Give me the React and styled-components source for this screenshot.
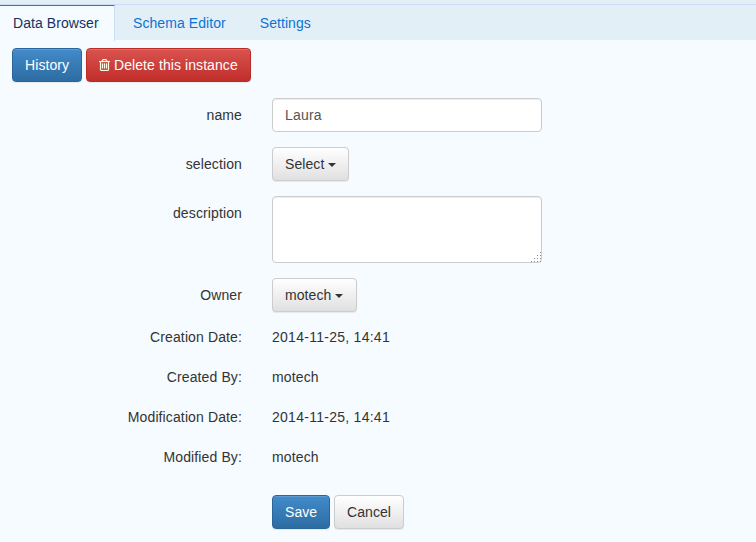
import React from "react";
import styled, { createGlobalStyle, css } from "styled-components";

const GlobalStyle = createGlobalStyle`
  * { box-sizing: border-box; }
  body {
    margin: 0;
    background: #f5fbff;
    color: #333;
    font: 14px/20px "Liberation Sans", Helvetica, Arial, sans-serif;
    overflow: hidden;
  }
`;

const Page = styled.main`
  height: 542px;
  background: #f5fbff;
`;

const TabBar = styled.nav`
  display: flex;
  height: 40px;
  padding-top: 5px;
  background: linear-gradient(#cddcf9, #cddcf9) 0 4px / 100% 1px no-repeat #e2eff7;
`;

const Tab = styled.a`
  height: 35px;
  padding: 8px 17px 0;
  letter-spacing: 0.07px;
  color: #0d73d2;
  ${(p) =>
    p.$active &&
    css`
      width: 115px;
      height: 36px;
      margin-right: 1px;
      padding: 7px 0 0 13px;
      border-top: 1px solid #0d83dd;
      border-right: 1px solid #cddcf9;
      background: #f5fbff;
      color: #14335f;
    `}
`;

const Toolbar = styled.div`
  display: flex;
  gap: 4px;
  padding: 8px 12px 0;
`;

const tones = {
  primary: css`
    color: #fff;
    border-color: #2b669a;
    background-image: linear-gradient(#428bca, #2d6ca2);
  `,
  danger: css`
    color: #fff;
    border-color: #b92c28;
    background-image: linear-gradient(#d9534f, #c12e2a);
  `,
  plain: css`
    color: #333;
    border-color: #ccc;
    background-image: linear-gradient(#fff, #e0e0e0);
  `,
};

const Button = styled.button`
  display: inline-flex;
  align-items: center;
  justify-content: flex-start;
  width: ${(p) => p.$width}px;
  height: 34px;
  padding: 0 0 0 12px;
  border: 1px solid;
  border-radius: 4px;
  font: inherit;
  letter-spacing: 0.08px;
  white-space: nowrap;
  box-shadow: inset 0 1px 0 rgba(255, 255, 255, 0.15), 0 1px 1px rgba(0, 0, 0, 0.075);
  ${(p) => tones[p.$tone]}
`;

const TrashIcon = styled.svg`
  width: 11px;
  height: 12px;
  margin-right: 4px;
  fill: #fffbe6;
  stroke: #fffbe6;
  stroke-width: 30;
`;

const Caret = styled.span`
  margin: 1px 0 0 4px;
  border-top: 4px solid #333;
  border-left: 4px solid transparent;
  border-right: 4px solid transparent;
`;

const Form = styled.form`
  display: flex;
  flex-direction: column;
  gap: 15px;
  padding-top: 16px;
`;

const Row = styled.div`
  display: grid;
  grid-template-columns: 242px 270px;
  column-gap: 30px;
  align-items: start;
`;

const Label = styled.label`
  padding-top: 7px;
  text-align: right;
  letter-spacing: 0.12px;
`;

const field = css`
  display: block;
  width: 270px;
  padding: 6px 12px;
  border: 1px solid #ccc;
  border-radius: 4px;
  background: #fff;
  color: #555;
  font: inherit;
  letter-spacing: 0.2px;
  box-shadow: inset 0 1px 1px rgba(0, 0, 0, 0.075);
`;

const Input = styled.input`
  ${field}
  height: 34px;
`;

const AreaWrap = styled.div`
  position: relative;
  height: 67px;
`;

const TextArea = styled.textarea`
  ${field}
  height: 67px;
  resize: none;
`;

const Grip = styled.svg`
  position: absolute;
  right: 1px;
  bottom: 1px;
  width: 10px;
  height: 10px;
  fill: #8a8a8a;
`;

const Details = styled.dl`
  display: grid;
  grid-template-columns: 242px 270px;
  column-gap: 30px;
  grid-auto-rows: 40px;
  margin: 0;
`;

const Term = styled.dt`
  text-align: right;
  letter-spacing: 0.12px;
`;

const Value = styled.dd`
  margin: 0;
  letter-spacing: ${(p) => (p.$numeric ? 0.27 : 0.15)}px;
`;

const Actions = styled.div`
  display: flex;
  gap: 4px;
  margin-top: -7px;
  padding-left: 272px;
`;

const details = [
  { term: "Creation Date:", value: "2014-11-25, 14:41", numeric: true },
  { term: "Created By:", value: "motech" },
  { term: "Modification Date:", value: "2014-11-25, 14:41", numeric: true },
  { term: "Modified By:", value: "motech" },
];

const gripDots = [0, 1, 2, 3].flatMap((r) =>
  Array.from({ length: r + 1 }, (_, i) => [9 - i * 3, r * 3])
);

export default function App() {
  return (
    <>
      <GlobalStyle />
      <Page>
        <TabBar>
          <Tab $active>Data Browser</Tab>
          <Tab>Schema Editor</Tab>
          <Tab>Settings</Tab>
        </TabBar>
        <Toolbar>
          <Button $tone="primary" $width={70}>History</Button>
          <Button $tone="danger" $width={165}>
            <TrashIcon viewBox="192 128 1408 1536">
              <path d="M704 736v576q0 14-9 23t-23 9h-64q-14 0-23-9t-9-23v-576q0-14 9-23t23-9h64q14 0 23 9t9 23zm256 0v576q0 14-9 23t-23 9h-64q-14 0-23-9t-9-23v-576q0-14 9-23t23-9h64q14 0 23 9t9 23zm256 0v576q0 14-9 23t-23 9h-64q-14 0-23-9t-9-23v-576q0-14 9-23t23-9h64q14 0 23 9t9 23zm128 724v-948h-896v948q0 22 7 40.5t14.5 27 10.5 8.5h832q3 0 10.5-8.5t14.5-27 7-40.5zm-672-1076h448l-48-117q-7-9-17-11h-317q-10 2-17 11zm928 32v64q0 14-9 23t-23 9h-96v948q0 83-47 143.5t-113 60.5h-832q-66 0-113-58.5t-47-141.5v-952h-96q-14 0-23-9t-9-23v-64q0-14 9-23t23-9h309l70-167q15-37 54-63t79-26h320q40 0 79 26t54 63l70 167h309q14 0 23 9t9 23z" />
            </TrashIcon>
            Delete this instance
          </Button>
        </Toolbar>
        <Form>
          <Row>
            <Label>name</Label>
            <Input defaultValue="Laura" />
          </Row>
          <Row>
            <Label>selection</Label>
            <Button type="button" $tone="plain" $width={77}>Select<Caret /></Button>
          </Row>
          <Row>
            <Label>description</Label>
            <AreaWrap>
              <TextArea />
              <Grip viewBox="0 0 10 10">
                {gripDots.map(([x, y]) => (
                  <rect key={`${x}-${y}`} x={x} y={y} width="1" height="1" />
                ))}
              </Grip>
            </AreaWrap>
          </Row>
          <Row>
            <Label>Owner</Label>
            <Button type="button" $tone="plain" $width={85}>motech<Caret /></Button>
          </Row>
          <Details>
            {details.map(({ term, value, numeric }) => (
              <React.Fragment key={term}>
                <Term>{term}</Term>
                <Value $numeric={numeric}>{value}</Value>
              </React.Fragment>
            ))}
          </Details>
          <Actions>
            <Button type="button" $tone="primary" $width={58}>Save</Button>
            <Button type="button" $tone="plain" $width={70}>Cancel</Button>
          </Actions>
        </Form>
      </Page>
    </>
  );
}
